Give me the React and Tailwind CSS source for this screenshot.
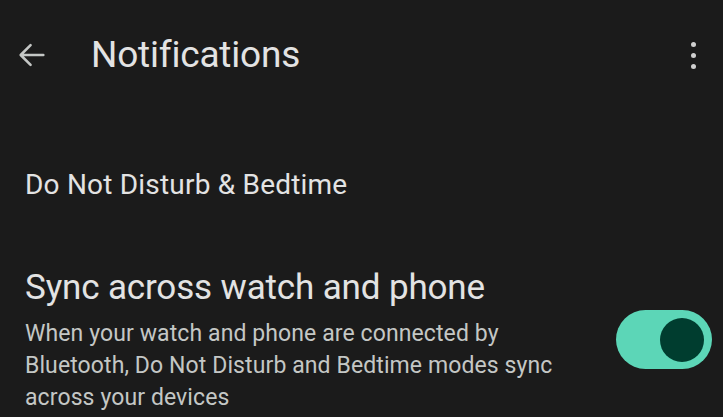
import React from "react";

export default function App() {
  return (
    <div
      className="w-[723px] h-[417px] overflow-hidden bg-[#1b1b1b] text-[#e3e3e3]"
      style={{ fontFamily: "Roboto, 'Noto Sans', sans-serif" }}
    >
      {/* Top bar */}
      <div className="flex items-center h-[56px] mt-[27px] pl-[15px] pr-[27px]">
        <svg width="34" height="34" viewBox="0 0 24 24" className="text-[#c4c7c5]">
          <path
            d="M20 12H4.5M11 5l-7 7 7 7"
            fill="none"
            stroke="currentColor"
            strokeWidth="1.8"
            strokeLinecap="round"
            strokeLinejoin="round"
          />
        </svg>
        <h1 className="ml-[42px] text-[37px] font-normal tracking-[-0.2px]">Notifications</h1>
        <div className="ml-auto flex flex-col items-center gap-[6px]">
          <span className="w-[5px] h-[5px] rounded-full bg-[#d0d0d0]" />
          <span className="w-[5px] h-[5px] rounded-full bg-[#d0d0d0]" />
          <span className="w-[5px] h-[5px] rounded-full bg-[#d0d0d0]" />
        </div>
      </div>

      {/* Do Not Disturb */}
      <div className="pl-[25px] mt-[84px] text-[28px] leading-[36px] tracking-[0.2px]">
        Do Not Disturb &amp; Bedtime
      </div>

      {/* Sync */}
      <div className="flex items-start pl-[25px] pr-[11px] mt-[63px]">
        <div className="flex-1">
          <div className="text-[35px] leading-[44px] tracking-[-0.15px]">Sync across watch and phone</div>
          <p className="mt-[8px] text-[23px] leading-[32px] tracking-[0.1px] text-[#c4c7c5] w-[535px]">
            When your watch and phone are connected by Bluetooth, Do Not Disturb and Bedtime modes sync across your devices
          </p>
        </div>
        <div className="mt-[44px] w-[96px] h-[59px] rounded-full bg-[#5cd6b7] flex items-center justify-end pr-[8px]">
          <span className="w-[44px] h-[44px] rounded-full bg-[#003d2f]" />
        </div>
      </div>
    </div>
  );
}
